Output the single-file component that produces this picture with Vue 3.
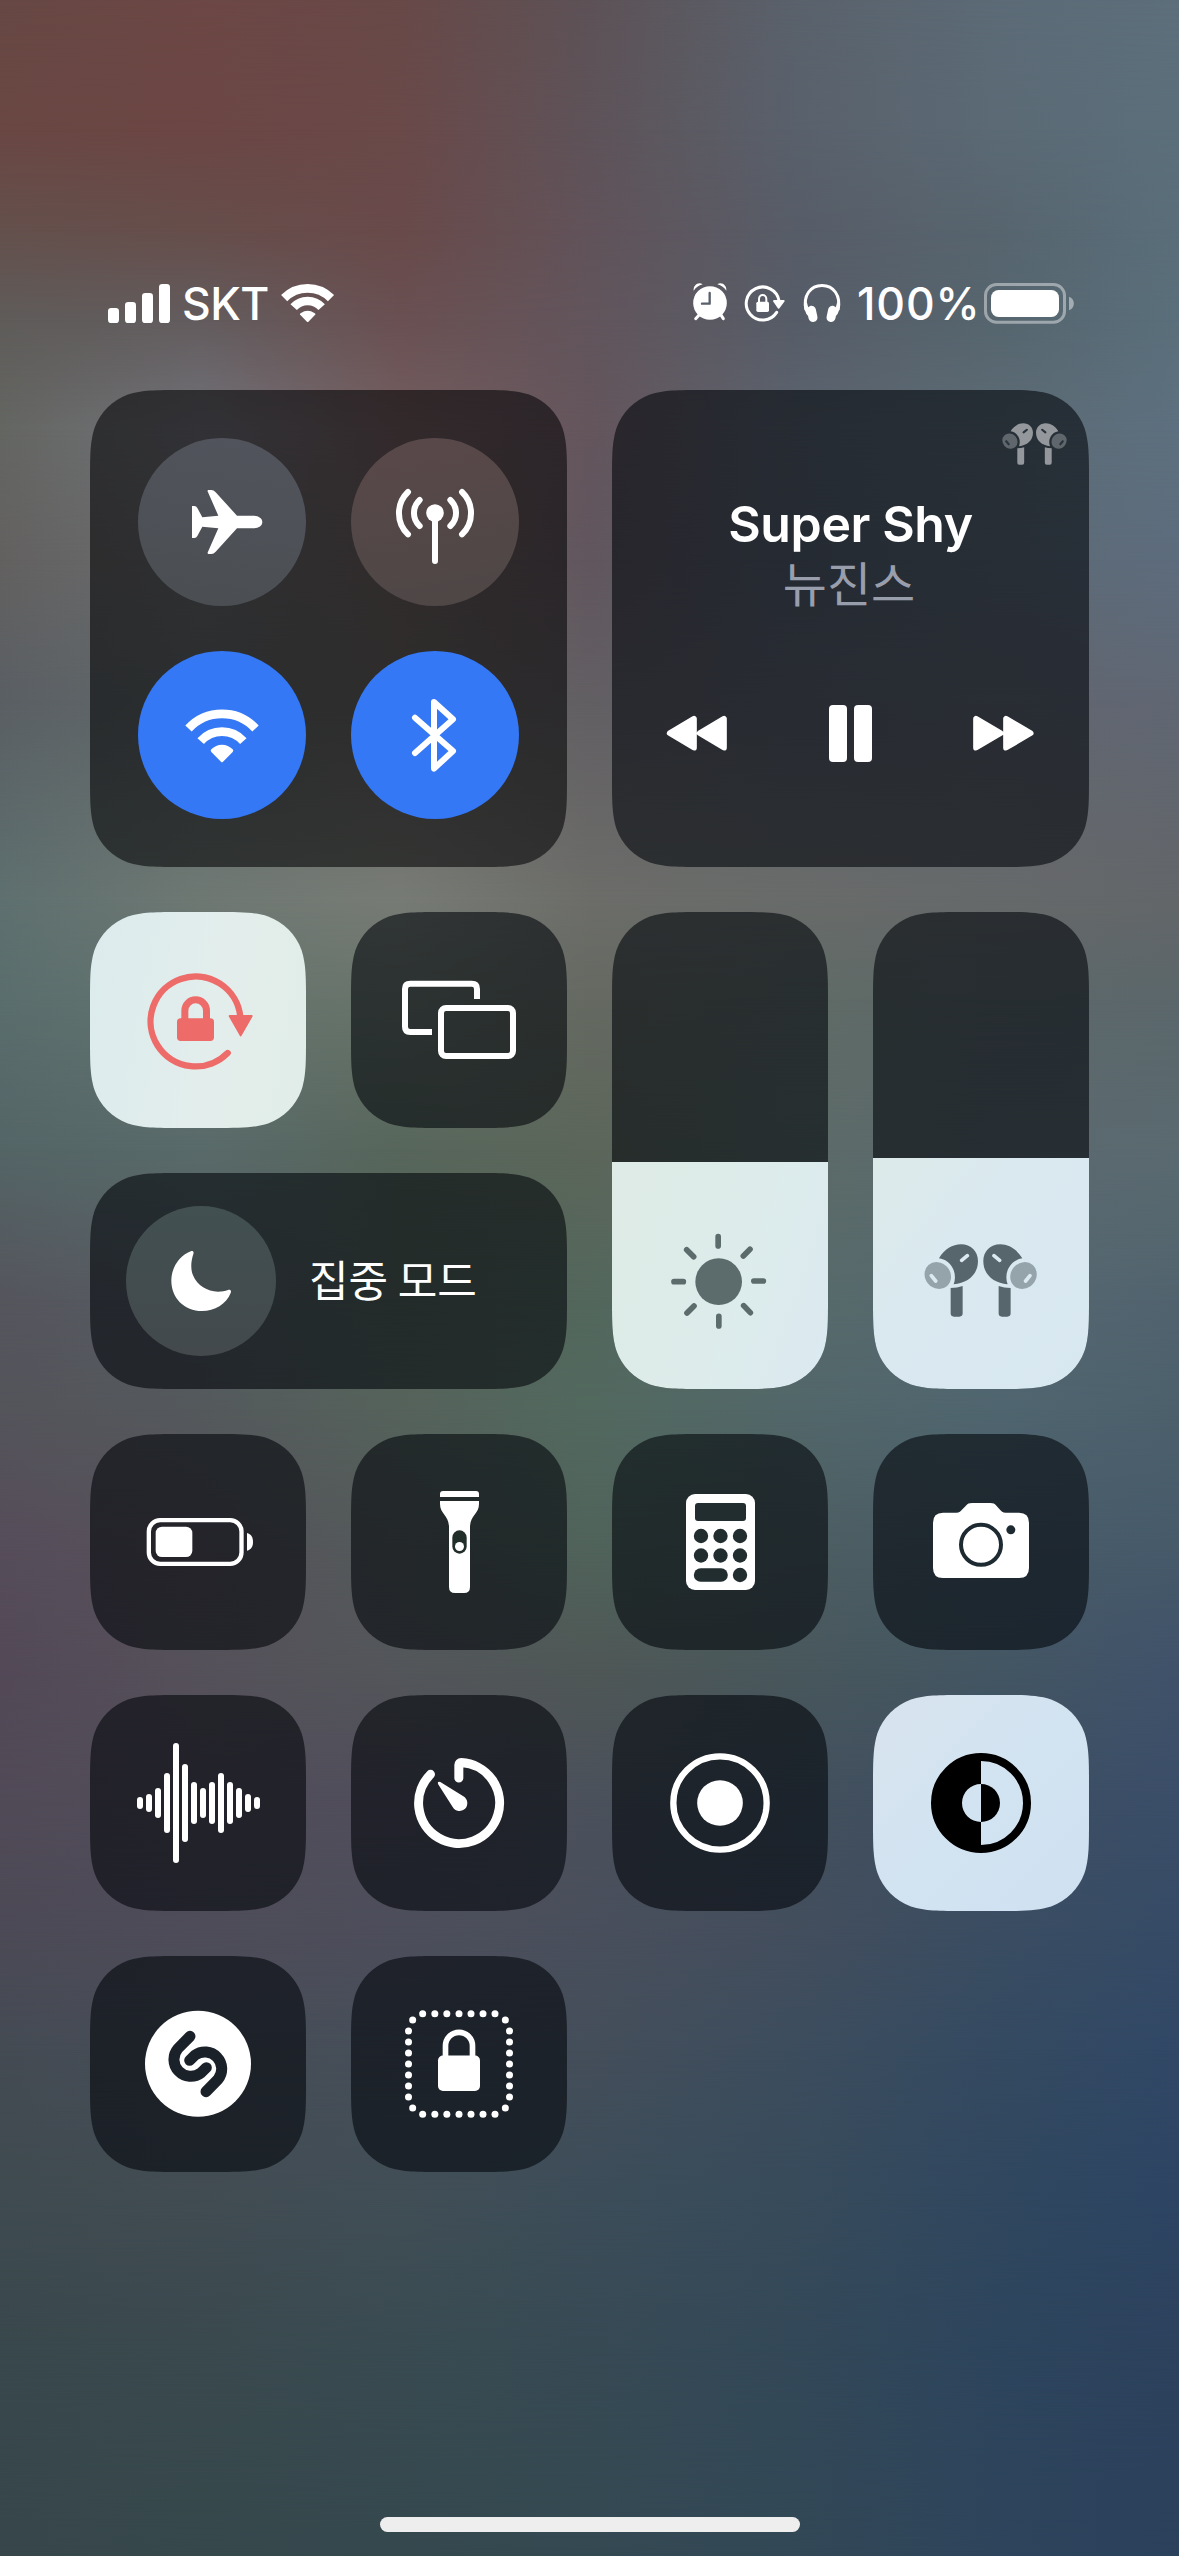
<script setup>
// Wallpaper colour field: each row is [y, colours at the xStops]
const xStops = [0, 200, 400, 590, 800, 1000, 1179]
const field = [
  [0, '#674844 #6c4745 #684948 #5d5257 #5a626c #5c6b77 #5d6f7b'],
  [130, '#6a4743 #6b4644 #6a4949 #5e5359 #59616c #5b6a75 #5b6f7b'],
  [230, '#64504c #664e4b #694a4a #61535a #575d68 #57656f #5a6e7a'],
  [320, '#5f5c5a #635c5e #6a5052 #62555c #565d68 #56666f #5a6f7b'],
  [430, '#646662 #72737a #745f61 #64555c #5c646f #5d6b75 #5d707f'],
  [560, '#636160 #6b6d70 #6f6361 #61565e #5a626e #5e6a75 #5d6c7d'],
  [700, '#5a5f64 #62696a #696662 #625f63 #60636d #626670 #606773'],
  [900, '#5e706f #6e7873 #777b75 #6c6d69 #686b69 #66696a #636669'],
  [1000, '#5a6e6d #64746f #69746a #656961 #606b66 #5d686a #5b676b'],
  [1150, '#546566 #596a6a #57665b #5c665a #5c6b68 #5c696f #5a6a70'],
  [1300, '#55555d #565d62 #56645a #53675c #576a6a #566871 #51636e'],
  [1410, '#54545b #54595c #55625b #52695f #52676a #4f656f #4c606c'],
  [1550, '#564d5a #57525a #535a5a #50635a #4d5e61 #495b68 #465a6a'],
  [1670, '#534957 #55515a #53565a #4f5756 #48575c #435663 #40526a'],
  [1800, '#514a57 #524d5a #504e5b #4b515b #43505d #3c4e61 #3b4e69'],
  [1930, '#4c4a56 #4e4c59 #4d4e5b #494f5c #434e5d #3a4d62 #364b66'],
  [2050, '#444b53 #474d57 #464f59 #444e5a #3c4d5e #344a61 #314866'],
  [2200, '#3f4b50 #414c52 #414e56 #3c4d59 #374b5b #30475f #2d4563'],
  [2350, '#39484c #3a494e #394b51 #374a54 #334858 #2d455d #2d425d'],
  [2556, '#37464b #36484b #35484e #344952 #324856 #2e445c #2b415c']
]
const ramp = (colours) =>
  `linear-gradient(90deg, ${colours.split(' ').map((c, i) => `${c} ${xStops[i]}px`).join(', ')})`
const bands = field.slice(0, -1).map((row, i) => ({
  height: `${field[i + 1][0] - row[0]}px`,
  from: ramp(row[1]),
  to: ramp(field[i + 1][1])
}))

// Continuous-curvature corner outline
function outline(w, h, r = 60) {
  const [a, b, c, d, e, f, g] = [1.52866, 1.08849, 0.8684, 0.63149, 0.37282, 0.16906, 0.07491].map((k) => k * r)
  return `path("M${a} 0H${w - a}C${w - b} 0 ${w - c} 0 ${w - d} ${g}C${w - e} ${f} ${w - f} ${e} ${w - g} ${d}C${w} ${c} ${w} ${b} ${w} ${a}` +
    `V${h - a}C${w} ${h - b} ${w} ${h - c} ${w - g} ${h - d}C${w - f} ${h - e} ${w - e} ${h - f} ${w - d} ${h - g}C${w - c} ${h} ${w - b} ${h} ${w - a} ${h}` +
    `H${a}C${b} ${h} ${c} ${h} ${d} ${h - g}C${e} ${h - f} ${f} ${h - e} ${g} ${h - d}C0 ${h - c} 0 ${h - b} 0 ${h - a}` +
    `V${a}C0 ${b} 0 ${c} ${g} ${d}C${f} ${e} ${e} ${f} ${d} ${g}C${c} 0 ${b} 0 ${a} 0Z")`
}
const squareShape = outline(216, 216)
const largeShape = outline(477, 477)
const wideShape = outline(477, 216)
const tallShape = outline(216, 477)

const waveHalf = [18, 27, 45, 90, 180, 117, 63, 45, 63, 90, 63, 45, 27, 18]
const across = [1028, 1064.5, 1100.5, 1137, 1173, 1209, 1245]
const down = [273, 306, 339, 372, 405, 438, 471]
const dots = [
  ...across.flatMap((x) => [[x, 221], [x, 523]]),
  ...down.flatMap((y) => [[985.5, y], [1288.5, y]]),
  [998, 240], [1276, 240], [998, 504], [1276, 504]
]
</script>

<template>
  <main class="screen">
    <svg class="defs" width="0" height="0">
      <symbol id="pods" viewBox="974 313 340 219">
        <g v-for="m in 2" :key="m" :transform="m === 2 ? 'translate(2288 0) scale(-1 1)' : undefined">
          <path class="pod" d="M1019 356C1035 329 1060 314 1085 314C1115 314 1136 335 1136 364C1136 405 1105 430 1063 434C1069 418 1068 399 1060 385C1051 369 1038 359 1019 356Z" />
          <path class="pod" d="M1054 445Q1074 445 1090 439V521Q1090 531 1080 531H1064Q1054 531 1054 521Z" />
          <ellipse class="bud" cx="1015.5" cy="407.500" rx="38" ry="42" transform="rotate(-42 1015.5 407.5)" />
          <path class="slot" d="M1087 362L1104 348M996 408L1009 424" />
        </g>
      </symbol>
    </svg>

    <div class="wallpaper">
      <div v-for="(b, i) in bands" :key="i" class="band" :style="{ height: b.height, background: b.from }">
        <div class="fade" :style="{ background: b.to }"></div>
      </div>
    </div>

    <header class="status">
      <svg class="signal" viewBox="84 0 186 270">
        <rect x="84" y="144" width="33" height="45" rx="10" />
        <rect x="135" y="126" width="33" height="63" rx="10" />
        <rect x="186" y="99" width="33" height="90" rx="10" />
        <rect x="237" y="72" width="33" height="117" rx="10" />
      </svg>
      <span class="carrier">SKT</span>
      <svg class="wifi-small" viewBox="606 0 153 270">
        <g class="line" stroke-width="26">
          <path d="M612.500 114.500A99 99 0 0 1 753 114.500M641 141.500A57 57 0 0 1 725 141.500" />
        </g>
        <path d="M662 166Q657 162 663 159Q683 146 703 159Q709 162 704 166L686 184.500Q683 188 680 184.500Z" />
      </svg>
      <span class="spacer"></span>
      <svg class="alarm" viewBox="99 0 102 270">
        <circle cx="150" cy="129" r="50.500" />
        <path d="M101 92C99 76 115 64 128 73Q110 78 101 92ZM199 92C201 76 185 64 172 73Q190 78 199 92Z" />
        <path class="line round" stroke-width="9" d="M118 164L107 176M182 164L190 176" />
        <path class="line round ink" stroke-width="7" d="M149 99V131H126" />
      </svg>
      <svg class="lock-small" viewBox="255 0 120 270">
        <path class="line round" stroke-width="9" d="M350 157A49.500 49.500 0 1 1 357 122" />
        <path class="joined" d="M342 123L371 123L356 143Z" />
        <rect x="289" y="125" width="38" height="31" rx="5" />
        <path class="line" stroke-width="6" d="M297 127V117A11 12 0 0 1 319 117V127" />
      </svg>
      <svg class="phones" viewBox="432 0 108 270">
        <path class="line" stroke-width="9" d="M438 150C428 106 452 76.500 486 76.500S544 106 534 150" />
        <rect x="443" y="137" width="27" height="49" rx="13" transform="rotate(-12 457 161)" />
        <rect x="502" y="137" width="27" height="49" rx="13" transform="rotate(12 515 161)" />
        <path d="M432 128H441L452 172Q436 168 432 138ZM540 128H531L520 172Q536 168 540 138Z" />
      </svg>
      <span class="percent">100%</span>
      <svg class="battery-small" viewBox="972 0 270 270">
        <rect class="line" x="976.500" y="73.500" width="237" height="113" rx="33" stroke-width="9" opacity=".42" />
        <rect x="993" y="90" width="204" height="81" rx="23" />
        <path d="M1227 110C1236 113 1241.500 121 1241.500 130.500S1236 148 1227 151Z" opacity=".45" />
      </svg>
    </header>

    <section class="controls">
      <div class="tile large connect">
        <div class="round-btn plane">
          <svg viewBox="174 174 504 504">
            <path d="M547 426C547 438 535 445 518 445H471L407 515Q401 522 394 522H385Q381 521 384 515L415 445L367 440L352 468Q349 474 343 474H336V378H343Q349 378 352 384L367 412L415 407L384 337Q381 331 385 330H394Q401 330 407 337L471 407H518C535 407 547 414 547 426Z" />
          </svg>
        </div>
        <div class="round-btn cellular">
          <svg viewBox="813 174 504 504">
            <circle cx="1065" cy="399" r="26.500" />
            <path class="line round" stroke-width="18" d="M1065 400V543M1146 336A88 88 0 0 1 1146 463M984 336A88 88 0 0 0 984 463M1111 360A53 53 0 0 1 1111 438M1019 360A53 53 0 0 0 1019 438" />
          </svg>
        </div>
        <div class="round-btn on">
          <svg viewBox="174 813 504 504">
            <path class="line" stroke-width="26" d="M325.500 1045.500A137 137 0 0 1 526.500 1045.500M362 1083.500A86 86 0 0 1 490 1083.500" />
            <path d="M394 1116Q390 1112 394 1108Q407 1094 426 1094T458 1108Q462 1112 458 1116L429 1145Q426 1148 423 1145Z" />
          </svg>
        </div>
        <div class="round-btn on">
          <svg viewBox="813 813 504 504">
            <path class="line round" stroke-width="18" d="M1005 1013L1119 1113L1062 1166V966L1119 1018L1005 1119" />
          </svg>
        </div>
      </div>

      <div class="tile large media">
        <svg class="route"><use href="#pods" /></svg>
        <div class="title">Super Shy</div>
        <div class="artist">뉴진스</div>
        <div class="transport">
          <svg width="60" height="57" viewBox="201 974 180 171">
            <path class="joined wide-join" d="M282 1015V1102L209 1058.500ZM372 1015V1102L299 1058.500Z" />
          </svg>
          <svg width="43" height="57" viewBox="687 974 129 171">
            <rect x="687" y="974" width="54" height="171" rx="12" />
            <rect x="762" y="974" width="54" height="171" rx="12" />
          </svg>
          <svg width="61" height="57" viewBox="1120 974 183 171">
            <path class="joined wide-join" d="M1129 1015V1102L1203 1058.500ZM1219 1015V1102L1293 1058.500Z" />
          </svg>
        </div>
      </div>

      <div class="tile lit rotation">
        <svg viewBox="30 36 648 648">
          <path class="line round" stroke-width="19" d="M443 459A135 135 0 1 1 481 350" />
          <path class="joined" d="M449 348H515L482 406Z" />
          <rect x="291" y="355" width="111" height="68" rx="11" />
          <path class="line" stroke-width="21" d="M314.500 360V332A32.500 32.500 0 0 1 379.500 332V360" />
        </svg>
      </div>
      <div class="tile">
        <svg viewBox="813 36 648 648">
          <path class="line" stroke-width="18" d="M1191 297V267Q1191 251.500 1175.500 251.500H990.500Q975 251.500 975 267V380.500Q975 396 990.500 396H1056" />
          <rect class="line" stroke-width="18" x="1083" y="324" width="216" height="144" rx="15" />
        </svg>
      </div>

      <div class="tile tall">
        <div class="level bright">
          <svg viewBox="36 66 648 681">
            <circle cx="356" cy="425" r="70" />
            <path class="line round" stroke-width="17" d="M354.500 290V318M356.500 529V558M222 425H250M461.500 423H490M260 329L281 350M450 328L430 348M261 519L282 498M451 518L431 497" />
          </svg>
        </div>
      </div>
      <div class="tile tall">
        <div class="level volume">
          <svg class="pods-large"><use href="#pods" /></svg>
        </div>
      </div>

      <div class="tile wide focus">
        <div class="round-btn moon">
          <svg viewBox="138 918 450 450">
            <path d="M334 1053C340 1052 342 1056 340 1062C333 1084 331 1107 339 1126C352 1158 382 1174 414 1175C426 1175 435 1173 444 1170C451 1168 455 1172 452 1179C439 1212 404 1233 366 1233C313 1233 274 1194 274 1142C274 1102 299 1065 334 1053Z" />
          </svg>
        </div>
        <span class="focus-label">집중 모드</span>
      </div>

      <div class="tile">
        <svg viewBox="30 42 648 648">
          <rect class="line" stroke-width="13" x="206.500" y="300.500" width="278" height="131" rx="34" />
          <rect x="227" y="320" width="110" height="91" rx="19" />
          <path d="M501 339C513 342 519 352 519 366S513 389 501 392Z" />
        </svg>
      </div>
      <div class="tile hole-green">
        <svg viewBox="813 42 648 648">
          <path d="M1080 231V222Q1080 213 1089 213H1188Q1197 213 1197 222V231Z" />
          <path d="M1080 243H1197V252C1197 282 1170 286 1170 322V501Q1170 519 1152 519H1125Q1107 519 1107 501V322C1107 286 1080 282 1080 252Z" />
          <rect class="hole" x="1117" y="331" width="43" height="70" rx="21.500" />
          <circle cx="1138.500" cy="379.500" r="13.500" />
        </svg>
      </div>
      <div class="tile hole-teal">
        <svg viewBox="36 42 648 648">
          <rect x="258" y="222" width="207" height="288" rx="27" />
          <g class="hole">
            <rect x="285" y="249" width="153" height="54" rx="9" />
            <template v-for="y in [348, 406.5, 465]" :key="y">
              <template v-for="x in [303, 361.5, 420]" :key="x">
                <circle v-if="y < 460 || x > 400" :cx="x" :cy="y" r="21.500" />
              </template>
            </template>
            <rect x="281.500" y="444.500" width="102" height="41" rx="20.500" />
          </g>
        </svg>
      </div>
      <div class="tile hole-navy">
        <svg viewBox="819 42 648 648">
          <path d="M1029 278H1069C1078 278 1082 274 1088 267L1097 258C1103 251 1107 249 1116 249H1171C1180 249 1184 251 1190 258L1198 267C1204 274 1208 278 1217 278H1257Q1287 278 1287 308V444Q1287 474 1257 474H1029Q999 474 999 444V308Q999 278 1029 278Z" />
          <circle class="hole-line" cx="1143" cy="374.500" r="60" stroke-width="12" />
          <circle class="hole" cx="1232.500" cy="329.500" r="13.500" />
        </svg>
      </div>

      <div class="tile">
        <svg viewBox="30 825 648 648">
          <rect v-for="(h, i) in waveHalf" :key="i" :x="171 + i * 27" :y="1149 - h" width="18" :height="h * 2" rx="9" />
        </svg>
      </div>
      <div class="tile">
        <svg viewBox="813 825 648 648">
          <path class="line round" stroke-width="27" d="M1136.500 1074V1035Q1136.500 1027.500 1144 1027.700A121.500 121.500 0 1 1 1051.500 1063" />
          <path d="M1081 1086L1150 1129A23.500 23.500 0 1 1 1118 1161L1074 1092Q1071 1083 1081 1086Z" />
        </svg>
      </div>
      <div class="tile">
        <svg viewBox="36 825 648 648">
          <circle class="line" cx="360" cy="1149" r="140" stroke-width="19" />
          <circle cx="360" cy="1149" r="68.500" />
        </svg>
      </div>
      <div class="tile lit appearance">
        <svg viewBox="819 825 648 648">
          <circle class="line" cx="1143" cy="1149" r="138" stroke-width="24" />
          <path d="M1143 1010V1092A57 57 0 0 0 1143 1206V1288A139 139 0 0 1 1143 1010Z" />
          <path d="M1143 1092A57 57 0 0 1 1143 1206Z" />
        </svg>
      </div>

      <div class="tile hole-night">
        <svg viewBox="30 48 648 648">
          <circle cx="354" cy="371.500" r="159" />
          <path class="hole-line round" stroke-width="33" d="M330 289L294 325.500A50.500 50.500 0 0 0 363 398.500L379 383M378 455L414 418A50.500 50.500 0 0 0 345 345.500L329 361" />
        </svg>
      </div>
      <div class="tile">
        <svg viewBox="813 48 648 648">
          <circle v-for="([x, y], i) in dots" :key="i" :cx="x" :cy="y" r="10.500" />
          <rect x="1074" y="346.500" width="126" height="106.500" rx="15" />
          <path class="line" stroke-width="17" d="M1096.500 350V318A40.500 41 0 0 1 1177.500 318V350" />
        </svg>
      </div>
    </section>

    <div class="home"></div>
  </main>
</template>

<style>
body {
  margin: 0;
  background: #3c4a54;
}
</style>

<style scoped>
.screen {
  position: relative;
  box-sizing: border-box;
  width: 1179px;
  height: 2556px;
  overflow: hidden;
  display: flex;
  flex-direction: column;
  padding-top: 260px;
  color: #fff;
  font-family: Inter, "Noto Sans CJK KR", sans-serif;
}
.defs {
  position: absolute;
}
.wallpaper {
  position: absolute;
  inset: 0;
}
.fade {
  height: 100%;
  -webkit-mask-image: linear-gradient(transparent, #000);
  mask-image: linear-gradient(transparent, #000);
}
svg {
  display: block;
  fill: currentColor;
  overflow: visible;
}
.line {
  fill: none;
  stroke: currentColor;
}
.round {
  stroke-linecap: round;
  stroke-linejoin: round;
}
.joined {
  stroke: currentColor;
  stroke-width: 6;
  stroke-linejoin: round;
}
.wide-join {
  stroke-width: 17;
}
.ink {
  stroke: #59606b;
}
.hole {
  fill: var(--hole);
}
.hole-line {
  fill: none;
  stroke: var(--hole);
}
.hole-green { --hole: #222e2a; }
.hole-teal { --hole: #212d2e; }
.hole-navy { --hole: #1d2a32; }
.hole-night { --hole: #1b2129; }

.status {
  position: relative;
  display: flex;
  align-items: center;
  height: 90px;
  padding: 0 105px 0 108px;
  font-size: 44.500px;
  font-weight: 450;
  line-height: 90px;
}
.status svg {
  height: 90px;
  flex: none;
}
.signal { width: 62px; }
.carrier {
  height: 93px;
  width: 100px;
  padding-left: 12px;
  letter-spacing: -0.6px;
}
.wifi-small { width: 51px; }
.spacer { flex: 1; }
.alarm { width: 34px; margin-right: 18px; }
.lock-small { width: 40px; margin-right: 19px; }
.phones { width: 36px; }
.percent {
  height: 93px;
  width: 127px;
  padding-left: 17px;
  letter-spacing: 0.9px;
  white-space: nowrap;
}
.battery-small { width: 90px; }

.controls {
  position: relative;
  display: grid;
  grid-template-columns: repeat(4, 216px);
  grid-template-rows: 477px repeat(5, 216px);
  gap: 45px;
  margin: 40px 90px 0;
}
.tile {
  background: rgba(0, 4, 8, 0.58);
  clip-path: v-bind(squareShape);
}
.large {
  grid-column: span 2;
  clip-path: v-bind(largeShape);
}
.wide {
  grid-column: 1 / span 2;
  grid-row: 3;
  clip-path: v-bind(wideShape);
}
.tall {
  grid-row: 2 / span 2;
  display: flex;
  flex-direction: column;
  justify-content: flex-end;
  clip-path: v-bind(tallShape);
}
.connect {
  display: grid;
  grid-template-columns: 168px 168px;
  grid-template-rows: 168px 168px;
  gap: 45px;
  padding: 48px;
  background: rgba(0, 0, 1, 0.56);
}
.round-btn {
  border-radius: 50%;
}
.plane {
  background: linear-gradient(190deg, #52545d, #4a4e51);
}
.cellular {
  background: linear-gradient(170deg, #5a4849, #4d4746);
}
.on {
  background: #3478f6;
}
.media {
  position: relative;
  display: flex;
  flex-direction: column;
  text-align: center;
}
.route {
  position: absolute;
  top: 33px;
  right: 22px;
  width: 65px;
  height: 42px;
  --pod: #94989c;
  --bud: #5f676d;
  --slot: #2a343d;
}
.pod { fill: var(--pod); }
.bud { fill: var(--bud); }
.slot {
  fill: none;
  stroke: var(--slot);
  stroke-width: 11;
  stroke-linecap: round;
}
.title {
  margin-top: 104px;
  height: 60px;
  line-height: 60px;
  font-size: 50px;
  font-weight: 600;
  letter-spacing: -0.4px;
}
.artist {
  height: 60px;
  padding-right: 3px;
  line-height: 54px;
  font-size: 48px;
  color: #989eac;
  font-family: "Noto Sans CJK KR", sans-serif;
}
.transport {
  display: flex;
  justify-content: space-between;
  margin: 91px 55px 0;
}
.lit.rotation {
  background: linear-gradient(100deg, #dcebed, #e3eeec 60%, #e1ede7);
  color: #ed6b69;
}
.lit.appearance {
  background: linear-gradient(135deg, #d8e4ee, #d2e3f1 50%, #cfe0f2);
  color: #000;
}
.bright {
  height: 227px;
  background: linear-gradient(110deg, #deebe6, #ddecea 50%, #dbe9f1);
  color: #5c6b6b;
}
.volume {
  display: flex;
  justify-content: center;
  align-items: flex-start;
  height: 231px;
  background: linear-gradient(130deg, #dceae9, #dae9f0 40%, #d8e8f1);
}
.pods-large {
  width: 113.300px;
  height: 73px;
  margin-top: 86.300px;
  --pod: #57666d;
  --bud: #95a4ab;
  --slot: #dce9f0;
}
.focus {
  display: flex;
  align-items: center;
}
.moon {
  width: 150px;
  height: 150px;
  margin-left: 36px;
  background: linear-gradient(#425052, #43494c);
}
.focus-label {
  margin-left: 33px;
  padding-bottom: 6px;
  font-family: "Noto Sans CJK KR", sans-serif;
  font-size: 43px;
  line-height: 60px;
}
.home {
  position: absolute;
  left: 380px;
  bottom: 24px;
  width: 420px;
  height: 15px;
  border-radius: 8px;
  background: #eee;
}
</style>
